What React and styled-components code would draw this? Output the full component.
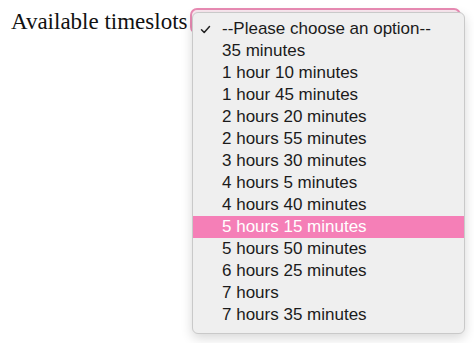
import React from 'react'
import styled, { createGlobalStyle } from 'styled-components'

const GlobalStyle = createGlobalStyle`
  html, body {
    margin: 0;
    padding: 0;
    background: #ffffff;
  }
`

const Page = styled.div`
  width: 474px;
  height: 343px;
  display: flex;
  align-items: flex-start;
  padding: 8px 0 0 11px;
  box-sizing: border-box;
  overflow: hidden;
`

const Label = styled.label`
  font-family: "Liberation Serif", "Times New Roman", serif;
  font-size: 23px;
  color: #111;
  line-height: 28px;
  width: 179px;
  white-space: nowrap;
`

const SelectWrap = styled.div`
  position: relative;
  width: 271px;
  height: 26px;
  border: 2px solid #e98bb4;
  border-radius: 7px;
  background: #fbe9f1;
  box-sizing: border-box;
`

const Menu = styled.ul`
  position: absolute;
  top: 2px;
  left: 0px;
  width: 273px;
  margin: 0;
  padding: 5px 0 7px;
  list-style: none;
  background: #efefef;
  border: 1px solid #c9c9c9;
  border-radius: 6px;
  box-shadow: 0 4px 12px rgba(0, 0, 0, 0.16);
  box-sizing: border-box;
`

const Option = styled.li`
  display: flex;
  align-items: center;
  height: 22px;
  padding-left: 29px;
  font-family: "Liberation Sans", Arial, sans-serif;
  font-size: 17px;
  color: ${p => (p.$active ? '#ffffff' : '#1b1b1b')};
  background: ${p => (p.$active ? '#f57fb7' : 'transparent')};
  white-space: nowrap;
`

const Check = styled.span`
  width: 20px;
  margin-left: -22px;
  margin-right: 2px;
  display: flex;
  align-items: center;
`

const options = [
  '--Please choose an option--',
  '35 minutes',
  '1 hour 10 minutes',
  '1 hour 45 minutes',
  '2 hours 20 minutes',
  '2 hours 55 minutes',
  '3 hours 30 minutes',
  '4 hours 5 minutes',
  '4 hours 40 minutes',
  '5 hours 15 minutes',
  '5 hours 50 minutes',
  '6 hours 25 minutes',
  '7 hours',
  '7 hours 35 minutes',
]

const App = () => {
  return (
    <>
      <GlobalStyle />
      <Page>
        <Label>Available timeslots</Label>
        <SelectWrap>
          <Menu>
            {options.map((o, i) => (
              <Option key={o} $active={i === 9}>
                {i === 0 && (
                  <Check>
                    <svg width="11" height="9" viewBox="0 0 11 9">
                      <path d="M1.5 4.8 L4.2 7.5 L9.5 1.5" fill="none" stroke="#222" strokeWidth="1.5" strokeLinecap="round" strokeLinejoin="round" />
                    </svg>
                  </Check>
                )}
                {o}
              </Option>
            ))}
          </Menu>
        </SelectWrap>
      </Page>
    </>
  )
}

export default App
